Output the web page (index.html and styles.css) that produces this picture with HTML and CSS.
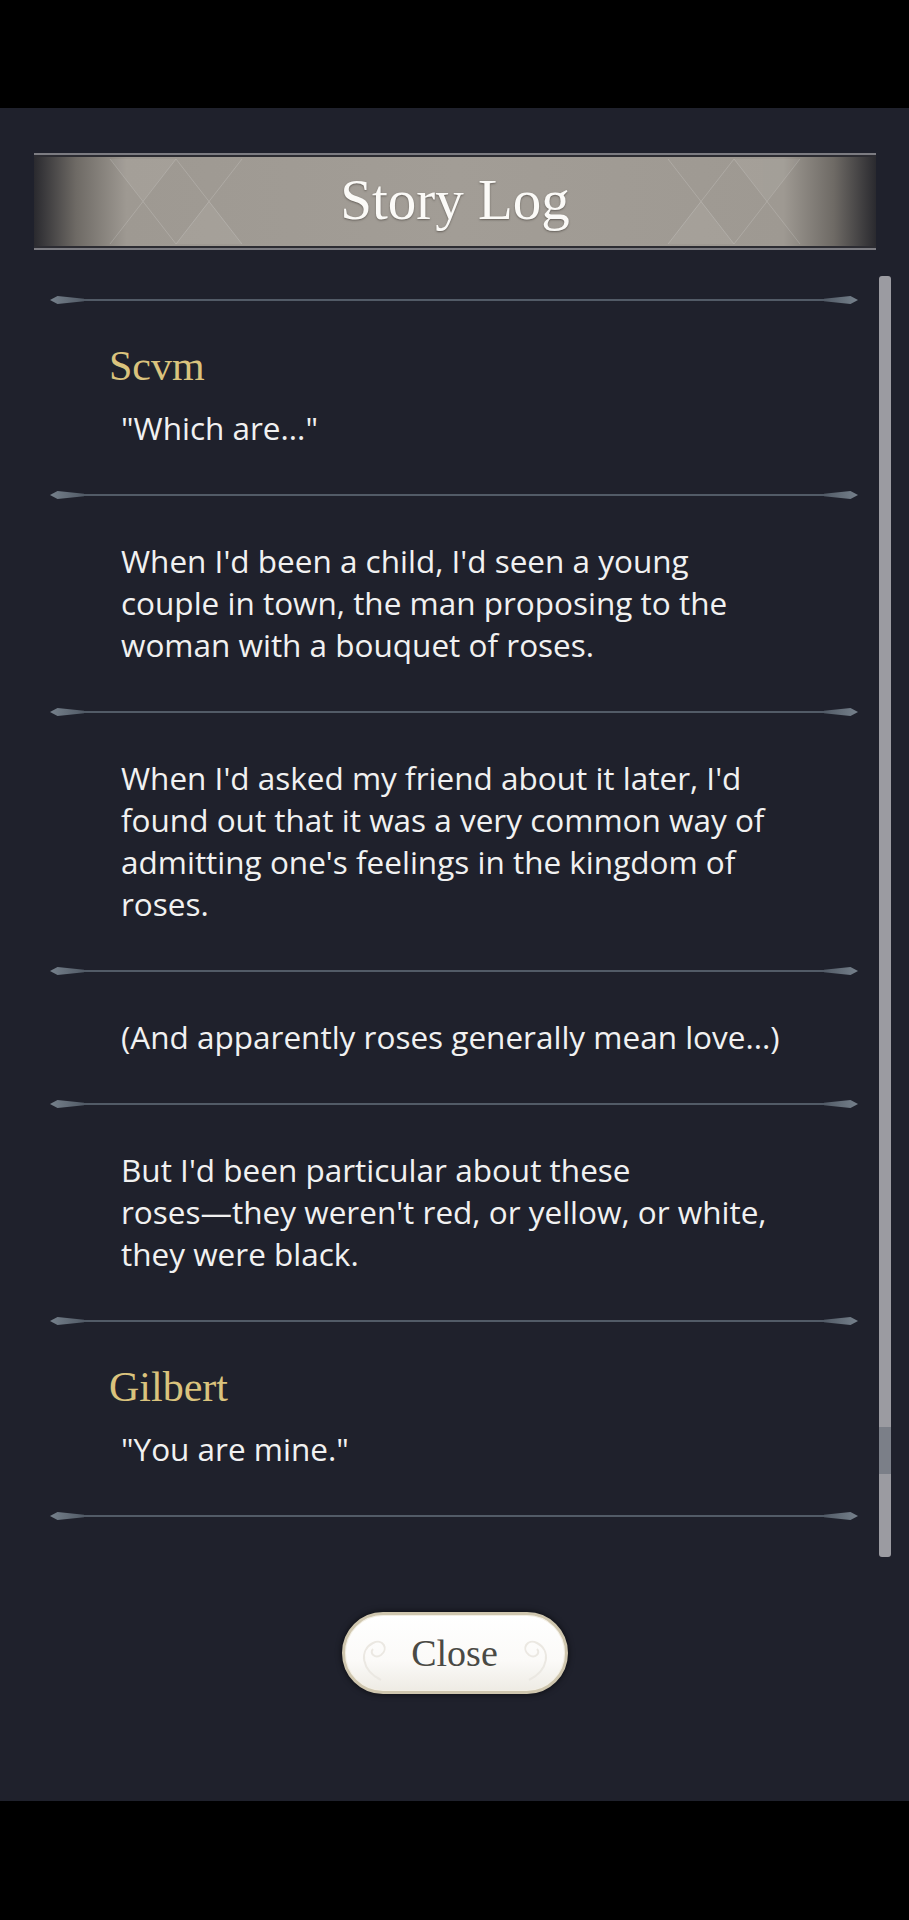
FILE: index.html
```html
<!DOCTYPE html>
<html lang="en">
<head>
	<meta charset="UTF-8">
	<meta name="viewport" content="width=device-width, initial-scale=1.0">
	<title>Story Log</title>
	<link rel="stylesheet" href="styles.css">
</head>
<body>
<div class="screen">
	<div class="black-bar top"></div>

	<div class="panel">
		<!-- title band -->
		<div class="title-band">
			<svg class="band-pattern" viewBox="0 0 842 87" preserveAspectRatio="none">
				<g stroke="#ffffff" stroke-width="1" fill="none" opacity="0.16">
					<path d="M76 0 L142 87 M142 0 L76 87"/>
					<path d="M142 0 L208 87 M208 0 L142 87"/>
					<path d="M766 0 L700 87 M700 0 L766 87"/>
					<path d="M700 0 L634 87 M634 0 L700 87"/>
				</g>
				<g fill="#ffffff" opacity="0.06">
					<polygon points="76,0 142,0 109,43"/>
					<polygon points="142,87 208,87 175,43"/>
					<polygon points="766,0 700,0 733,43"/>
					<polygon points="700,87 634,87 667,43"/>
				</g>
			</svg>
			<h1 class="band-title">Story Log</h1>
		</div>

		<!-- log list + scrollbar -->
		<div class="log-wrap">
			<div class="log-list">
				<div class="sep"></div>
				<div class="entry">
					<div class="speaker">Scvm</div>
					<p class="line">"Which are..."</p>
				</div>
				<div class="sep"></div>
				<div class="entry">
					<p class="line">When I'd been a child, I'd seen a young<br>couple in town, the man proposing to the<br>woman with a bouquet of roses.</p>
				</div>
				<div class="sep"></div>
				<div class="entry">
					<p class="line">When I'd asked my friend about it later, I'd<br>found out that it was a very common way of<br>admitting one's feelings in the kingdom of<br>roses.</p>
				</div>
				<div class="sep"></div>
				<div class="entry">
					<p class="line">(And apparently roses generally mean love...)</p>
				</div>
				<div class="sep"></div>
				<div class="entry">
					<p class="line">But I'd been particular about these<br>roses—they weren't red, or yellow, or white,<br>they were black.</p>
				</div>
				<div class="sep"></div>
				<div class="entry">
					<div class="speaker">Gilbert</div>
					<p class="line">"You are mine."</p>
				</div>
				<div class="sep"></div>
			</div>
			<div class="scrollbar">
				<div class="scroll-thumb"></div>
			</div>
		</div>

		<div class="actions">
			<button class="close-btn">
				<svg class="btn-swirl left" viewBox="0 0 40 60">
					<path d="M30 55 C10 45 8 25 22 18 C32 13 38 24 30 30 C24 34 18 28 22 24" stroke="#ebe8e2" stroke-width="2" fill="none"/>
				</svg>
				<span>Close</span>
				<svg class="btn-swirl right" viewBox="0 0 40 60">
					<path d="M10 55 C30 45 32 25 18 18 C8 13 2 24 10 30 C16 34 22 28 18 24" stroke="#ebe8e2" stroke-width="2" fill="none"/>
				</svg>
			</button>
		</div>
	</div>

	<div class="black-bar bottom"></div>
</div>
</body>
</html>
```

FILE: styles.css
```css
body {
	margin: 0;
	background-color: #000;
	font-family: "Open Sans", "Noto Sans", sans-serif;
	color: #f1f1f1;
}
.screen {
	width: 909px;
	height: 1920px;
	display: flex;
	flex-direction: column;
}
.black-bar {
	background-color: #000;
}
.black-bar.top {
	height: 108px;
}
.black-bar.bottom {
	height: 119px;
}
.panel {
	flex: 1;
	background-color: #1f212c;
	display: flex;
	flex-direction: column;
}

/* title band */
.title-band {
	position: relative;
	margin: 45px 33px 0 34px;
	height: 97px;
	box-sizing: border-box;
	border-top: 2px solid #7c7c82;
	border-bottom: 2px solid #7c7c82;
	padding: 2px 0;
	background: linear-gradient(to right, #2a2a2f 0%, #6e6a65 5%, #9e9992 11%, #a29d96 50%, #9e9992 89%, #6e6a65 95%, #2a2a2f 100%) content-box, #2c2c32;
	display: flex;
	align-items: center;
	justify-content: center;
}
.band-pattern {
	position: absolute;
	left: 0;
	top: 4px;
	width: 100%;
	height: calc(100% - 8px);
}
.band-title {
	position: relative;
	margin: 0;
	font-family: "Liberation Serif", serif;
	font-weight: normal;
	font-size: 57px;
	color: #fbfaf7;
	text-shadow: 0 1px 2px rgba(60, 55, 50, 0.6);
	line-height: 1;
	padding-bottom: 4px;
}

/* log */
.log-wrap {
	display: flex;
	margin-top: 26px;
}
.log-list {
	margin-left: 50px;
	width: 808px;
	padding-top: 20px;
}
.sep {
	position: relative;
	height: 8px;
	background: linear-gradient(to bottom, transparent 3px, #525b67 3px, #525b67 5px, transparent 5px);
	margin: 0 2px;
}
.sep::before, .sep::after {
	content: "";
	position: absolute;
	top: 0;
	width: 34px;
	height: 8px;
}
.sep::before {
	left: -2px;
	background: linear-gradient(to right, #76818c, #525b67);
	clip-path: polygon(0 50%, 22% 0, 100% 35%, 100% 65%, 22% 100%);
}
.sep::after {
	right: -2px;
	background: linear-gradient(to left, #76818c, #525b67);
	clip-path: polygon(100% 50%, 78% 0, 0 35%, 0 65%, 78% 100%);
}
.entry {
	padding: 41px 0 42px;
}
.speaker {
	margin-left: 59px;
	margin-bottom: 20px;
	font-family: "Liberation Serif", serif;
	font-size: 42px;
	line-height: 42px;
	color: #dac37d;
}
.line {
	margin: 0;
	padding-left: 71px;
	font-size: 31.5px;
	line-height: 42px;
	white-space: nowrap;
}
.scrollbar {
	position: relative;
	margin-left: 21px;
	width: 12px;
	height: 1281px;
	border-radius: 3px;
	background-color: #9b9ba1;
}
.scroll-thumb {
	position: absolute;
	left: 0;
	right: 0;
	top: 1151px;
	height: 47px;
	background-color: #7b7f88;
}

/* close button */
.actions {
	display: flex;
	justify-content: center;
	margin-top: 55px;
}
.close-btn {
	position: relative;
	width: 226px;
	height: 82px;
	border-radius: 41px;
	border: 3px solid #cfc6ae;
	background: linear-gradient(to bottom, #ffffff 0%, #fbfaf8 60%, #eeebe4 100%);
	box-shadow: 0 0 6px rgba(0, 0, 0, 0.7), inset 0 0 0 1px #f3efe4;
	font-family: "Liberation Serif", serif;
	font-size: 38px;
	color: #4a4a45;
	display: flex;
	align-items: center;
	justify-content: center;
	padding: 0;
	cursor: pointer;
}
.btn-swirl {
	position: absolute;
	top: 10px;
	width: 40px;
	height: 60px;
}
.btn-swirl.left {
	left: 6px;
}
.btn-swirl.right {
	right: 6px;
}
```
